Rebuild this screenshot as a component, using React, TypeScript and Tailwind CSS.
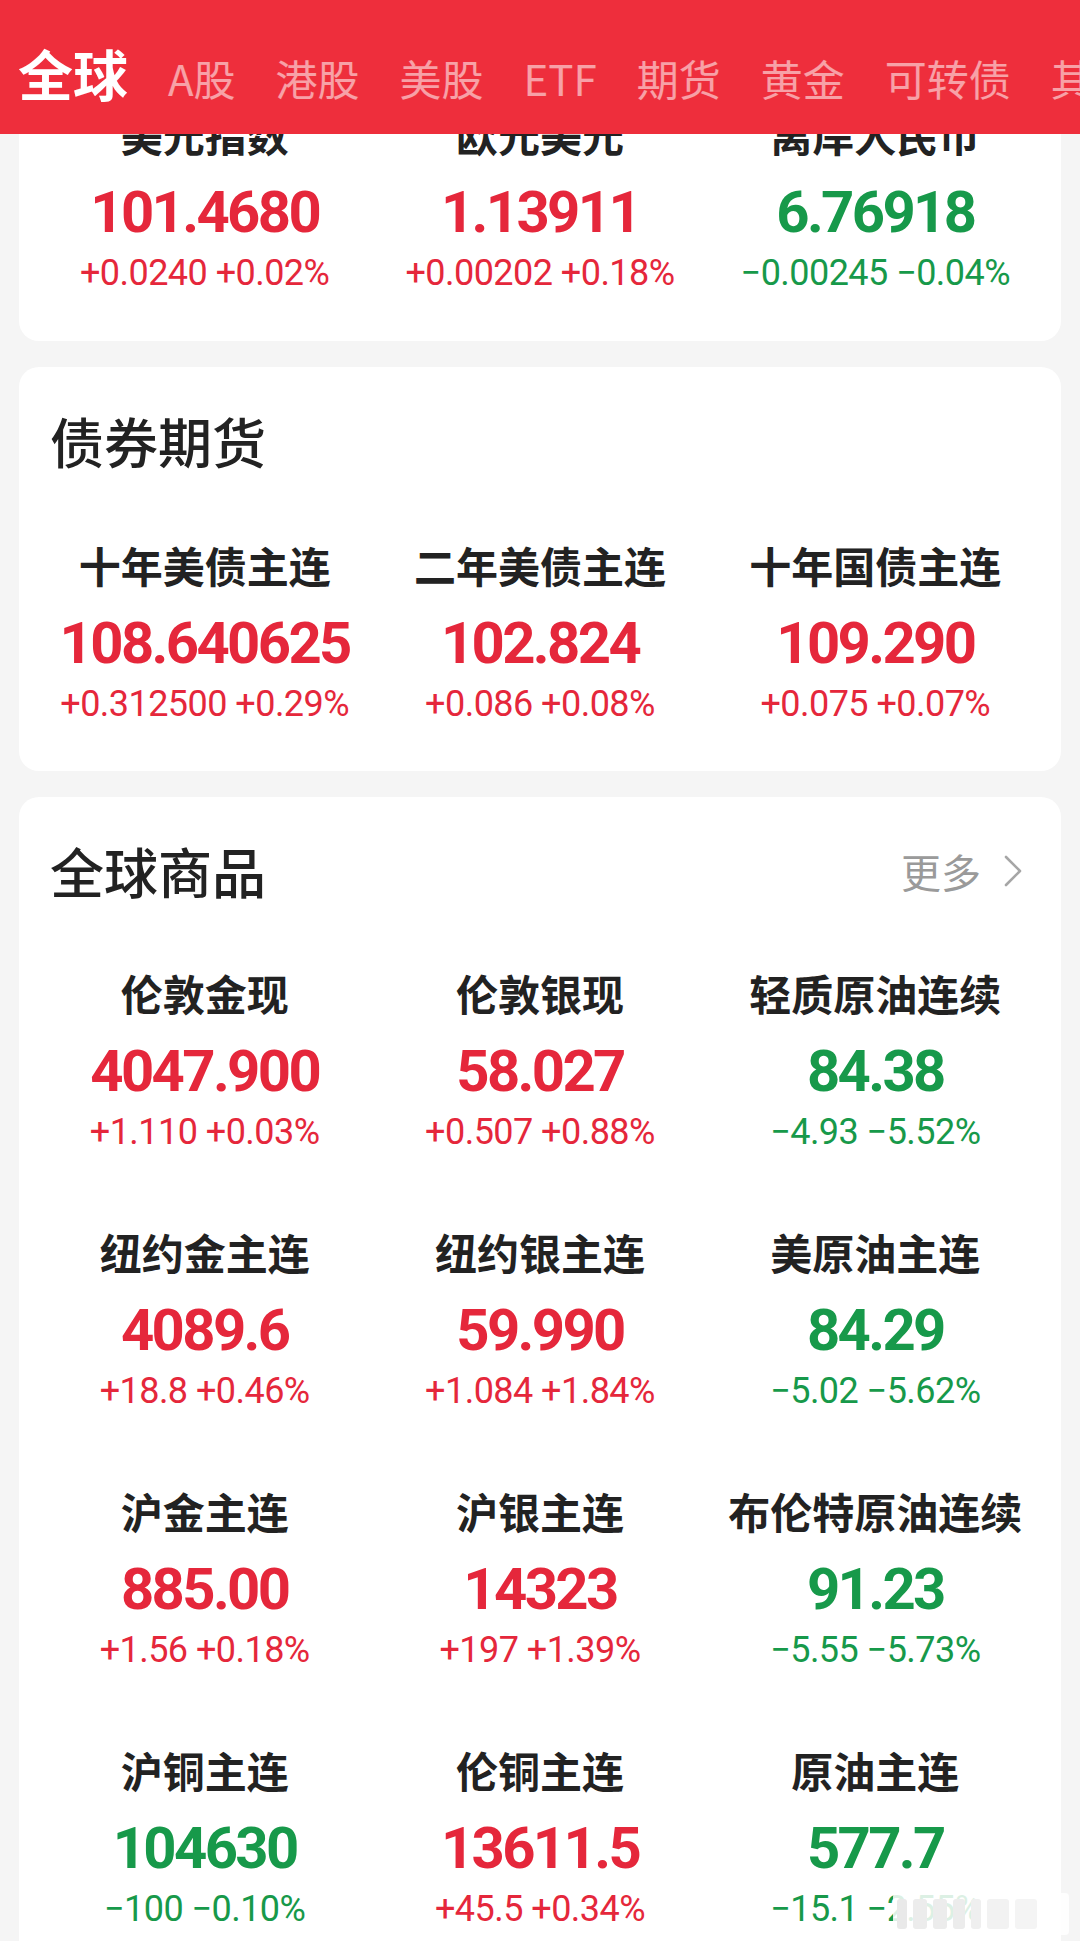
import React from "react";

type Quote = {
  name: string;
  price: string;
  change: string;
  up: boolean;
};

const forex: Quote[] = [
  { name: "美元指数", price: "101.4680", change: "+0.0240 +0.02%", up: true },
  { name: "欧元美元", price: "1.13911", change: "+0.00202 +0.18%", up: true },
  { name: "离岸人民币", price: "6.76918", change: "−0.00245 −0.04%", up: false },
];

const bonds: Quote[] = [
  { name: "十年美债主连", price: "108.640625", change: "+0.312500 +0.29%", up: true },
  { name: "二年美债主连", price: "102.824", change: "+0.086 +0.08%", up: true },
  { name: "十年国债主连", price: "109.290", change: "+0.075 +0.07%", up: true },
];

const commodities: Quote[] = [
  { name: "伦敦金现", price: "4047.900", change: "+1.110 +0.03%", up: true },
  { name: "伦敦银现", price: "58.027", change: "+0.507 +0.88%", up: true },
  { name: "轻质原油连续", price: "84.38", change: "−4.93 −5.52%", up: false },
  { name: "纽约金主连", price: "4089.6", change: "+18.8 +0.46%", up: true },
  { name: "纽约银主连", price: "59.990", change: "+1.084 +1.84%", up: true },
  { name: "美原油主连", price: "84.29", change: "−5.02 −5.62%", up: false },
  { name: "沪金主连", price: "885.00", change: "+1.56 +0.18%", up: true },
  { name: "沪银主连", price: "14323", change: "+197 +1.39%", up: true },
  { name: "布伦特原油连续", price: "91.23", change: "−5.55 −5.73%", up: false },
  { name: "沪铜主连", price: "104630", change: "−100 −0.10%", up: false },
  { name: "伦铜主连", price: "13611.5", change: "+45.5 +0.34%", up: true },
  { name: "原油主连", price: "577.7", change: "−15.1 −2.55%", up: false },
];

const tabs = ["A股", "港股", "美股", "ETF", "期货", "黄金", "可转债", "其他"];

function QuoteCell({ q }: { q: Quote }) {
  const color = q.up ? "text-[#e5273b]" : "text-[#17994a]";
  return (
    <div className="flex flex-col items-center">
      <div className="whitespace-nowrap text-[42px] leading-[42px] font-bold text-[#222222]">{q.name}</div>
      <div className={`mt-[28px] font-['Roboto',sans-serif] text-[58px] leading-[58px] font-bold tracking-[-0.045em] ${color}`}>
        {q.price}
      </div>
      <div className={`mt-[14px] whitespace-nowrap font-['Roboto',sans-serif] text-[36px] leading-[36px] tracking-[-0.015em] ${color}`}>
        {q.change}
      </div>
    </div>
  );
}

export default function App() {
  return (
    <div className="relative h-[1941px] overflow-hidden bg-[#f5f5f5] font-['Noto_Sans_CJK_SC','Noto_Sans',sans-serif]">
      {/* top tab bar, lies over the scrolled list */}
      <div className="absolute inset-x-0 top-0 z-10 h-[134px] bg-[#ee2e3c]">
        <div className="flex items-baseline gap-[40px] whitespace-nowrap pl-[18px] pt-[45px]">
          <span className="text-[55px] leading-[55px] font-bold text-white">全球</span>
          {tabs.map((t) => (
            <span key={t} className="text-[42px] leading-[42px] text-white/55">
              {t}
            </span>
          ))}
        </div>
      </div>

      <div className="flex flex-col gap-[26px] px-[19px]">
        {/* 外汇 (scrolled under header) */}
        <div className="rounded-[20px] bg-white px-[18px] pt-[113px] pb-[50px]">
          <div className="grid grid-cols-3">
            {forex.map((q) => (
              <QuoteCell key={q.name} q={q} />
            ))}
          </div>
        </div>

        {/* 债券期货 */}
        <div className="rounded-[20px] bg-white px-[18px] pt-[47px] pb-[49px]">
          <div className="px-[13px] text-[54px] leading-[54px] font-medium text-[#222222]">债券期货</div>
          <div className="mt-[76px] grid grid-cols-3">
            {bonds.map((q) => (
              <QuoteCell key={q.name} q={q} />
            ))}
          </div>
        </div>

        {/* 全球商品 */}
        <div className="relative rounded-[20px] bg-white px-[18px] pt-[47px] pb-[60px]">
          <div className="flex items-center justify-between pl-[13px] pr-[20px]">
            <span className="text-[54px] leading-[54px] font-medium text-[#222222]">全球商品</span>
            <span className="flex items-center gap-[22px] text-[40px] leading-[40px] text-[#9a9a9a]">
              更多
              <svg width="20" height="32" viewBox="0 0 20 32" fill="none">
                <polyline points="3,2 17,16 3,30" stroke="#a6a6a6" strokeWidth="2.6" strokeLinecap="round" strokeLinejoin="round" />
              </svg>
            </span>
          </div>
          <div className="mt-[74px] grid grid-cols-3 gap-y-[81px]">
            {commodities.map((q) => (
              <QuoteCell key={q.name} q={q} />
            ))}
          </div>
        </div>
      </div>

      {/* watermark */}
      <div className="absolute left-[893px] top-[1893px] z-10 flex h-[42px] w-[176px] items-center gap-[6px] rounded-[4px] bg-white/85 px-[4px]">
        <span className="h-[30px] w-[10px] rounded-[3px] bg-[#e9e9e9]" />
        <span className="h-[30px] w-[14px] rounded-[3px] bg-[#ececec]" />
        <span className="h-[30px] w-[14px] rounded-[3px] bg-[#ececec]" />
        <span className="h-[30px] w-[12px] rounded-[3px] bg-[#ececec]" />
        <span className="h-[30px] w-[10px] rounded-[3px] bg-[#efefef]" />
        <span className="h-[30px] w-[22px] rounded-[3px] bg-[#f2f2f2]" />
        <span className="h-[30px] w-[22px] rounded-[3px] bg-[#f4f4f4]" />
      </div>
    </div>
  );
}
